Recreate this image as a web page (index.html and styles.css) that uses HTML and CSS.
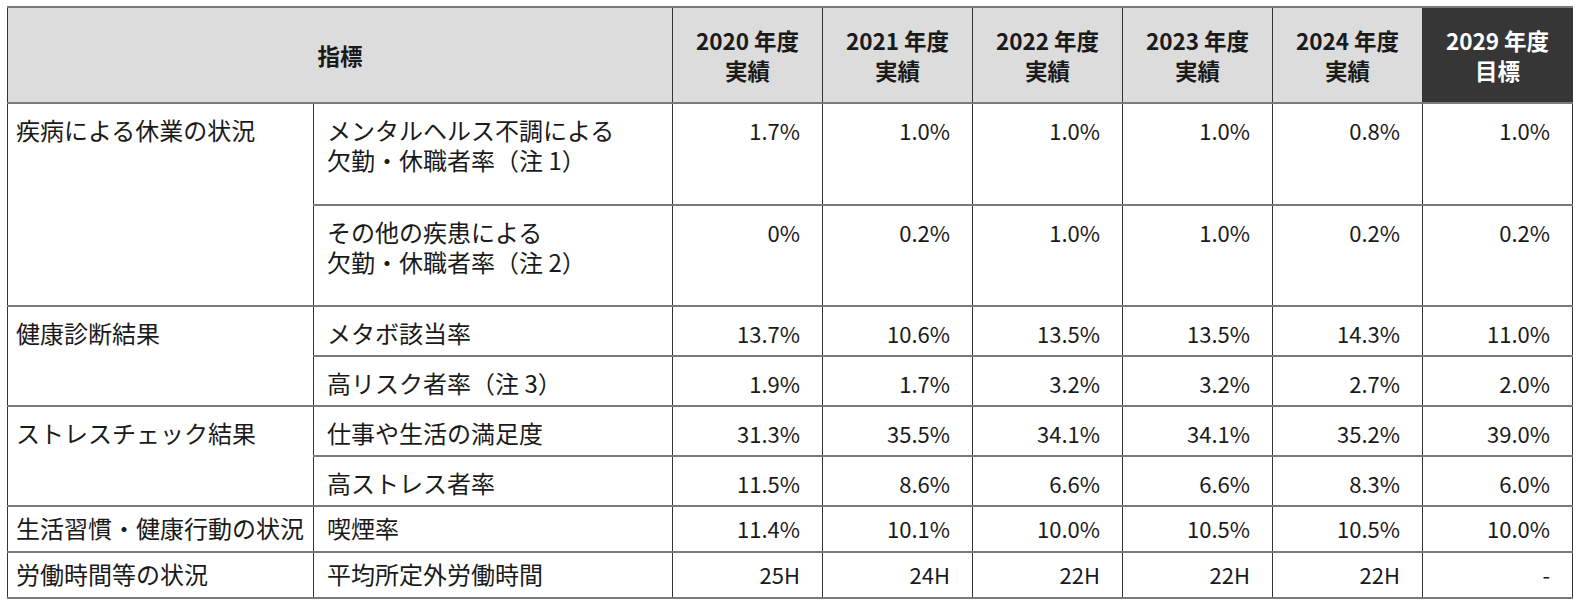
FILE: index.html
```html
<!DOCTYPE html>
<html lang="ja">
<head>
<meta charset="utf-8">
<link rel="stylesheet" href="styles.css">
</head>
<body>
<table class="kpi">
  <colgroup>
    <col class="c-cat"><col class="c-item">
    <col class="c-year"><col class="c-year"><col class="c-year"><col class="c-year"><col class="c-year"><col class="c-year">
  </colgroup>
  <thead>
    <tr>
      <th colspan="2" class="h-main">指標</th>
      <th>2020 年度<br>実績</th>
      <th>2021 年度<br>実績</th>
      <th>2022 年度<br>実績</th>
      <th>2023 年度<br>実績</th>
      <th>2024 年度<br>実績</th>
      <th class="h-goal">2029 年度<br>目標</th>
    </tr>
  </thead>
  <tbody>
    <tr class="r-tall">
      <td rowspan="2" class="cat">疾病による休業の状況</td>
      <td class="item">メンタルヘルス不調による<br>欠勤・休職者率（注 1）</td>
      <td class="num">1.7%</td><td class="num">1.0%</td><td class="num">1.0%</td><td class="num">1.0%</td><td class="num">0.8%</td><td class="num">1.0%</td>
    </tr>
    <tr class="r-tall2">
      <td class="item">その他の疾患による<br>欠勤・休職者率（注 2）</td>
      <td class="num">0%</td><td class="num">0.2%</td><td class="num">1.0%</td><td class="num">1.0%</td><td class="num">0.2%</td><td class="num">0.2%</td>
    </tr>
    <tr class="r-mid">
      <td rowspan="2" class="cat">健康診断結果</td>
      <td class="item">メタボ該当率</td>
      <td class="num">13.7%</td><td class="num">10.6%</td><td class="num">13.5%</td><td class="num">13.5%</td><td class="num">14.3%</td><td class="num">11.0%</td>
    </tr>
    <tr class="r-mid">
      <td class="item">高リスク者率（注 3）</td>
      <td class="num">1.9%</td><td class="num">1.7%</td><td class="num">3.2%</td><td class="num">3.2%</td><td class="num">2.7%</td><td class="num">2.0%</td>
    </tr>
    <tr class="r-mid">
      <td rowspan="2" class="cat">ストレスチェック結果</td>
      <td class="item">仕事や生活の満足度</td>
      <td class="num">31.3%</td><td class="num">35.5%</td><td class="num">34.1%</td><td class="num">34.1%</td><td class="num">35.2%</td><td class="num">39.0%</td>
    </tr>
    <tr class="r-mid r-thin">
      <td class="item">高ストレス者率</td>
      <td class="num">11.5%</td><td class="num">8.6%</td><td class="num">6.6%</td><td class="num">6.6%</td><td class="num">8.3%</td><td class="num">6.0%</td>
    </tr>
    <tr class="r-low">
      <td class="cat">生活習慣・健康行動の状況</td>
      <td class="item">喫煙率</td>
      <td class="num">11.4%</td><td class="num">10.1%</td><td class="num">10.0%</td><td class="num">10.5%</td><td class="num">10.5%</td><td class="num">10.0%</td>
    </tr>
    <tr class="r-low">
      <td class="cat">労働時間等の状況</td>
      <td class="item">平均所定外労働時間</td>
      <td class="num">25H</td><td class="num">24H</td><td class="num">22H</td><td class="num">22H</td><td class="num">22H</td><td class="num">-</td>
    </tr>
  </tbody>
</table>
</body>
</html>
```
FILE: styles.css
```css
html, body {
  margin: 0;
  padding: 0;
  background: #ffffff;
}
body {
  padding: 6px 7px;
  font-family: "Noto Sans CJK JP", "Noto Sans", sans-serif;
  color: #1a1a1a;
}
.kpi {
  border-collapse: collapse;
  table-layout: fixed;
  width: 1565px;
  font-size: 24px;
  line-height: 30px;
}
.c-cat { width: 306px; }
.c-item { width: 359px; }
.c-year { width: 150px; }

.kpi th,
.kpi td {
  border-left: 1px solid #333;
  border-right: 1px solid #333;
  border-top: 2px solid #7a7a7a;
  border-bottom: 2px solid #7a7a7a;
}
.kpi thead th {
  background: #dcdcdc;
  font-weight: 700;
  font-size: 22.5px;
  height: 94px;
  text-align: center;
  vertical-align: middle;
  padding: 0;
}
.kpi thead th.h-goal {
  background: #363636;
  color: #ffffff;
}
.kpi td {
  vertical-align: top;
  padding: 11px 22px 0 8px;
}
.kpi td.cat {
  padding-right: 2px;
  white-space: nowrap;
}
.kpi td.item {
  padding-left: 13px;
  padding-right: 4px;
  white-space: nowrap;
}
.kpi td.num {
  text-align: right;
  font-size: 22px;
}
.r-tall td { height: 89px; }
.r-tall2 td { height: 88px; }
.r-mid td { height: 37px; }
.r-low td { height: 38px; padding-top: 6px; }
.r-thin td { border-top: 1px solid #222; }
```
